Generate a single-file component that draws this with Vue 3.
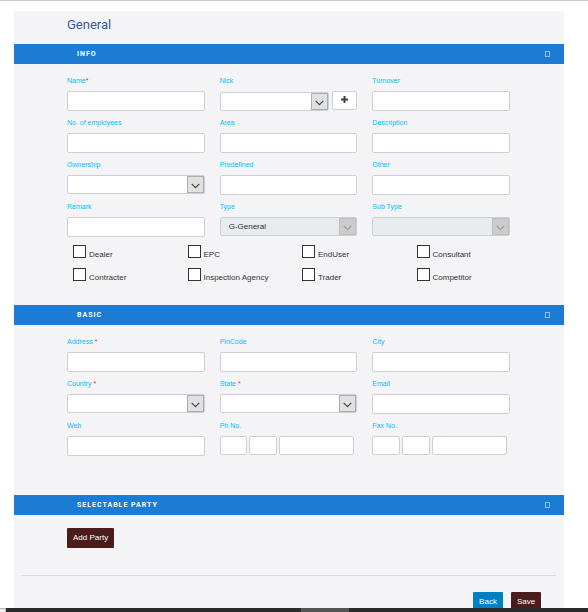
<script setup>
import { reactive } from 'vue'

const infoFields = [
  { id: 'name', label: 'Name', mark: '*' },
  { id: 'nick', label: 'Nick', kind: 'combo' },
  { id: 'turnover', label: 'Turnover' },
  { id: 'employees', label: 'No. of employees' },
  { id: 'area', label: 'Area' },
  { id: 'description', label: 'Description' },
  { id: 'ownership', label: 'Ownership', kind: 'select' },
  { id: 'predefined', label: 'Predefined' },
  { id: 'other', label: 'Other' },
  { id: 'remark', label: 'Remark' },
  { id: 'type', label: 'Type', kind: 'select', disabled: true, option: 'G-General' },
  { id: 'subtype', label: 'Sub Type', kind: 'select', disabled: true },
]

const basicFields = [
  { id: 'address', label: 'Address', mark: ' *' },
  { id: 'pincode', label: 'PinCode' },
  { id: 'city', label: 'City' },
  { id: 'country', label: 'Country', mark: ' *', kind: 'select' },
  { id: 'state', label: 'State', mark: ' *', kind: 'select' },
  { id: 'email', label: 'Email' },
  { id: 'web', label: 'Web' },
  { id: 'phone', label: 'Ph No.', kind: 'phone' },
  { id: 'fax', label: 'Fax No.', kind: 'phone' },
]

const sections = [
  { id: 'info', title: 'INFO', fields: infoFields },
  { id: 'basic', title: 'BASIC', fields: basicFields },
  { id: 'party', title: 'SELECTABLE PARTY', fields: [] },
]

const roles = ['Dealer', 'EPC', 'EndUser', 'Consultant', 'Contracter', 'Inspection Agency', 'Trader', 'Competitor']
const checked = reactive({})
const closed = reactive({})
</script>

<template>
  <div class="page">
    <main class="panel">
      <h1 class="title">General</h1>
      <form @submit.prevent>
        <section v-for="s in sections" :key="s.id">
          <header class="bar">
            <h2>{{ s.title }}</h2>
            <button type="button" class="toggle" :aria-label="'Toggle ' + s.title" @click="closed[s.id] = !closed[s.id]"></button>
          </header>
          <div v-show="!closed[s.id]" class="body" :class="s.id">
            <div v-if="s.fields.length" class="fields">
              <div v-for="f in s.fields" :key="f.id" class="field">
                <label :for="f.id">{{ f.label }}<span v-if="f.mark" class="mark">{{ f.mark }}</span></label>
                <div v-if="f.kind === 'phone'" class="phone">
                  <input :id="f.id" class="box" type="text" :aria-label="f.label + ' country code'">
                  <input class="box" type="text" :aria-label="f.label + ' area code'">
                  <input class="box" type="text" :aria-label="f.label + ' number'">
                </div>
                <div v-else-if="f.kind" class="picker" :class="f.kind">
                  <div class="drop" :class="{ off: f.disabled }">
                    <select :id="f.id" class="box" :disabled="f.disabled">
                      <option>{{ f.option || '' }}</option>
                    </select>
                    <span class="arrow">
                      <svg viewBox="0 0 9 6" width="9" height="6" aria-hidden="true"><path d="M0.7 0.8 L4.5 4.6 L8.3 0.8" /></svg>
                    </span>
                  </div>
                  <button v-if="f.kind === 'combo'" type="button" class="plus" aria-label="Add nick">
                    <svg viewBox="0 0 7 7" width="7" height="7" aria-hidden="true"><path d="M0 3.5H7M3.5 0V7" /></svg>
                  </button>
                </div>
                <input v-else :id="f.id" class="box" type="text">
              </div>
            </div>
            <div v-if="s.id === 'info'" class="roles">
              <label v-for="r in roles" :key="r" class="role">
                <input v-model="checked[r]" type="checkbox">
                <span>{{ r }}</span>
              </label>
            </div>
            <button v-if="s.id === 'party'" type="button" class="btn dark">Add Party</button>
          </div>
        </section>
        <footer class="actions">
          <button type="button" class="btn blue">Back</button>
          <button type="submit" class="btn dark">Save</button>
        </footer>
      </form>
    </main>
    <div class="taskbar"><i class="corner"></i><i class="active"></i></div>
  </div>
</template>

<style>
body {
  background: #fff;
  overflow: hidden;
}
</style>

<style scoped>
* {
  box-sizing: border-box;
}
.page {
  border-top: 1px solid #c9c9c9;
  padding: 10px 24px 0 14px;
  font-family: "Liberation Sans", Arial, sans-serif;
  font-size: 8px;
  color: #333;
}
.panel {
  background: #f4f4f7;
}
.title {
  margin: 0;
  padding: 4px 53px 9px;
  font: 400 13px/20px Roboto, sans-serif;
  color: #2a5caa;
}
.bar {
  display: flex;
  align-items: center;
  justify-content: space-between;
  height: 20px;
  padding: 0 14px 0 63px;
  background: #1c7cd3;
}
.bar h2 {
  margin: 0;
  font: 700 7px/20px Roboto, Arial, sans-serif;
  letter-spacing: 1px;
  color: #fff;
}
.toggle {
  width: 5px;
  height: 6px;
  padding: 0;
  border: 1px solid #8dc0f0;
  background: transparent;
}
.body.info {
  padding: 8px 0 14px;
}
.body.basic {
  padding: 8px 0 36px;
}
.body.party {
  padding: 13px 53px 27px;
}
.fields {
  display: grid;
  grid-template-columns: repeat(3, minmax(0, 1fr));
  column-gap: 15px;
  padding: 0 54px 0 53px;
}
.field {
  height: 42px;
}
.field > label {
  display: block;
  height: 19px;
  font-size: 7px;
  line-height: 17px;
  color: #00bfff;
  white-space: pre;
}
.mark {
  color: #f22;
}
.box {
  display: block;
  width: 100%;
  min-width: 0;
  height: 20px;
  margin: 0;
  padding: 0 8px;
  border: 1px solid #cbd0d8;
  border-radius: 2px;
  background: #fff;
  font: inherit;
  color: #333;
}
.phone {
  display: grid;
  grid-template-columns: 28fr 28fr 76fr;
  gap: 2px;
  padding-right: 3px;
}
.phone .box {
  height: 19px;
  padding: 0 2px;
}
.picker {
  display: flex;
  gap: 3px;
}
.combo {
  height: 20px;
  align-items: flex-end;
}
.drop {
  position: relative;
  flex: 1;
  min-width: 0;
}
.drop .box {
  height: 19px;
  appearance: none;
}
.off .box {
  background: #e7ebee;
  opacity: 1;
}
.arrow {
  position: absolute;
  top: 1px;
  right: 1px;
  bottom: 1px;
  width: 17px;
  display: grid;
  place-items: center;
  padding-top: 2px;
  border: 1px solid #adadad;
  background: #e1e1e1;
  pointer-events: none;
}
.arrow svg {
  fill: none;
  stroke: #444;
  stroke-width: 1.2;
}
.off .arrow {
  border-color: #bfbfbf;
  background: #ccc;
}
.off .arrow svg {
  stroke: #9b9b9b;
}
.plus {
  display: grid;
  place-items: center;
  align-self: flex-start;
  width: 25px;
  height: 19px;
  padding: 0 0 2px;
  border: 1px solid #cbd0d8;
  border-radius: 2px;
  background: #fff;
}
.plus svg {
  stroke: #3a3f4a;
  stroke-width: 2;
}
.roles {
  display: grid;
  grid-template-columns: repeat(4, 1fr);
  padding: 5px 33px 0 59px;
}
.role {
  display: flex;
  gap: 3px;
  height: 23px;
  line-height: 20px;
  white-space: nowrap;
}
.role input {
  appearance: none;
  flex: none;
  width: 13px;
  height: 13px;
  margin: 0;
  border: 1px solid #333;
  background: #fff;
}
.role input:checked {
  background: #1c7cd3;
}
.btn {
  height: 20px;
  padding: 0 6px 2px;
  border: 0;
  border-radius: 1px;
  font: inherit;
  color: #fff;
}
.party .btn {
  display: block;
}
.dark {
  background: #4a1c1c;
}
.blue {
  background: #0480c2;
}
.actions {
  display: flex;
  justify-content: flex-end;
  gap: 8px;
  margin: 0 8px 0 7px;
  padding: 16px 15px 0;
  border-top: 1px solid #dadbde;
}
.actions .btn {
  width: 30px;
}
.taskbar {
  position: fixed;
  right: 0;
  bottom: 0;
  left: 0;
  display: grid;
  grid-template-columns: 6px 295fr 48fr 239fr;
  height: 4px;
  background: #2c2b2b;
}
.corner {
  border-top: 1px solid #b5b5b5;
  border-right: 1px solid #b5b5b5;
  background: #eee;
}
.active {
  grid-column: 3;
  background: #555;
}
</style>
